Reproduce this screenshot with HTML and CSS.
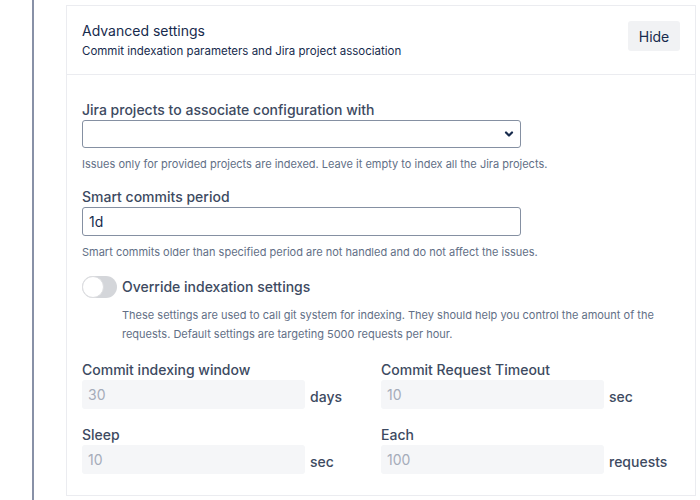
FILE: index.html
```html
<!DOCTYPE html>
<html lang="en">
<head>
  <meta charset="UTF-8">
  <title>Advanced settings</title>
  <meta name="viewport" content="width=device-width, initial-scale=1.0">
  <link rel="stylesheet" href="styles.css">
</head>
<body>
  <div class="layout">
    <div class="rail"></div>

    <div class="card">
      <div class="card-header">
        <div>
          <div class="card-title">Advanced settings</div>
          <div class="card-subtitle">Commit indexation parameters and Jira project association</div>
        </div>
        <button class="btn-hide">Hide</button>
      </div>

      <div class="card-body">
        <label class="field-label">Jira projects to associate configuration with</label>
        <div class="select-box">
          <svg width="10" height="8" viewBox="0 0 10 8">
            <path d="M2 2.5 L5 5.5 L8 2.5" fill="none" stroke="#172b4d" stroke-width="2.2" stroke-linecap="round" stroke-linejoin="round"/>
          </svg>
        </div>
        <p class="help">Issues only for provided projects are indexed. Leave it empty to index all the Jira projects.</p>

        <label class="field-label">Smart commits period</label>
        <input class="text-input" type="text" value="1d">
        <p class="help">Smart commits older than specified period are not handled and do not affect the issues.</p>

        <div class="toggle-row">
          <span class="toggle"><span class="knob"></span></span>
          <span class="toggle-label">Override indexation settings</span>
        </div>
        <p class="toggle-desc">These settings are used to call git system for indexing. They should help you control the amount of the requests. Default settings are targeting 5000 requests per hour.</p>

        <div class="limits">
          <div class="limit">
            <label class="field-label">Commit indexing window</label>
            <div class="limit-row">
              <input class="num-input" type="text" placeholder="30" disabled>
              <span class="unit">days</span>
            </div>
          </div>
          <div class="limit">
            <label class="field-label">Commit Request Timeout</label>
            <div class="limit-row">
              <input class="num-input" type="text" placeholder="10" disabled>
              <span class="unit">sec</span>
            </div>
          </div>
          <div class="limit">
            <label class="field-label">Sleep</label>
            <div class="limit-row">
              <input class="num-input" type="text" placeholder="10" disabled>
              <span class="unit">sec</span>
            </div>
          </div>
          <div class="limit">
            <label class="field-label">Each</label>
            <div class="limit-row">
              <input class="num-input" type="text" placeholder="100" disabled>
              <span class="unit">requests</span>
            </div>
          </div>
        </div>
      </div>
    </div>
  </div>
</body>
</html>
```

FILE: styles.css
```css
body {
  margin: 0;
  font-family: Inter, "Noto Sans", sans-serif;
  background-color: #ffffff;
  color: #172b4d;
}

.layout {
  display: flex;
  align-items: flex-start;
  padding-left: 32px;
  height: 500px;
  overflow: hidden;
}

.rail {
  width: 2px;
  height: 500px;
  background-color: #8891a7;
  flex-shrink: 0;
}

.card {
  margin: 5px 0 0 32px;
  width: 628px;
  border: 1px solid #ebecf0;
}

.card-header {
  display: flex;
  justify-content: space-between;
  align-items: flex-start;
  padding: 15px 15px 15px 15px;
  border-bottom: 1px solid #ebecf0;
}

.card-title {
  font-size: 14px;
  line-height: 20px;
  color: #172b4d;
}

.card-subtitle {
  margin-top: 2px;
  font-size: 11.5px;
  line-height: 16px;
  color: #172b4d;
}

.btn-hide {
  font-family: inherit;
  font-size: 14px;
  color: #172b4d;
  background-color: #f1f2f4;
  border: none;
  border-radius: 3px;
  width: 52px;
  height: 30px;
  padding: 0;
  cursor: pointer;
}

.card-body {
  padding: 25px 15px 21px 15px;
}

.field-label {
  display: block;
  font-size: 14px;
  line-height: 20px;
  font-weight: 500;
  color: #3d4a61;
}

.select-box {
  box-sizing: border-box;
  width: 439px;
  height: 28px;
  border: 1px solid #8590a2;
  border-radius: 3px;
  display: flex;
  align-items: center;
  justify-content: flex-end;
  padding-right: 6px;
}

.text-input {
  display: block;
  box-sizing: border-box;
  width: 439px;
  height: 29px;
  margin: 0;
  padding: 0 6px;
  font-family: inherit;
  font-size: 14px;
  color: #172b4d;
  border: 1px solid #8590a2;
  border-radius: 3px;
}

.help {
  margin: 8px 0 15px 0;
  font-size: 11px;
  line-height: 16px;
  color: #626f86;
}

.toggle-row {
  display: flex;
  align-items: center;
  gap: 5px;
  margin-top: 16px;
}

.toggle {
  display: inline-block;
  width: 35px;
  height: 22px;
  border-radius: 11px;
  background-color: #d4d6da;
}

.knob {
  display: block;
  width: 20px;
  height: 20px;
  border-radius: 50%;
  background-color: #ffffff;
  border: 1px solid #dcdde0;
}

.toggle-label {
  font-size: 14px;
  line-height: 20px;
  font-weight: 500;
  color: #3d4a61;
}

.toggle-desc {
  margin: 8px 0 16px 40px;
  font-size: 11px;
  line-height: 19px;
  color: #626f86;
}

.limits {
  display: grid;
  grid-template-columns: 299px 299px;
  row-gap: 16px;
}

.limit-row {
  display: flex;
  align-items: center;
}

.num-input {
  box-sizing: border-box;
  width: 223px;
  height: 29px;
  margin: 0;
  padding: 0 6px;
  font-family: inherit;
  font-size: 14px;
  background-color: #f5f6f8;
  border: none;
  border-radius: 3px;
}

.num-input::placeholder {
  color: #a5acba;
}

.unit {
  margin-left: 5px;
  padding-top: 3px;
  font-size: 14px;
  font-weight: 500;
  color: #3d4a61;
}
```
